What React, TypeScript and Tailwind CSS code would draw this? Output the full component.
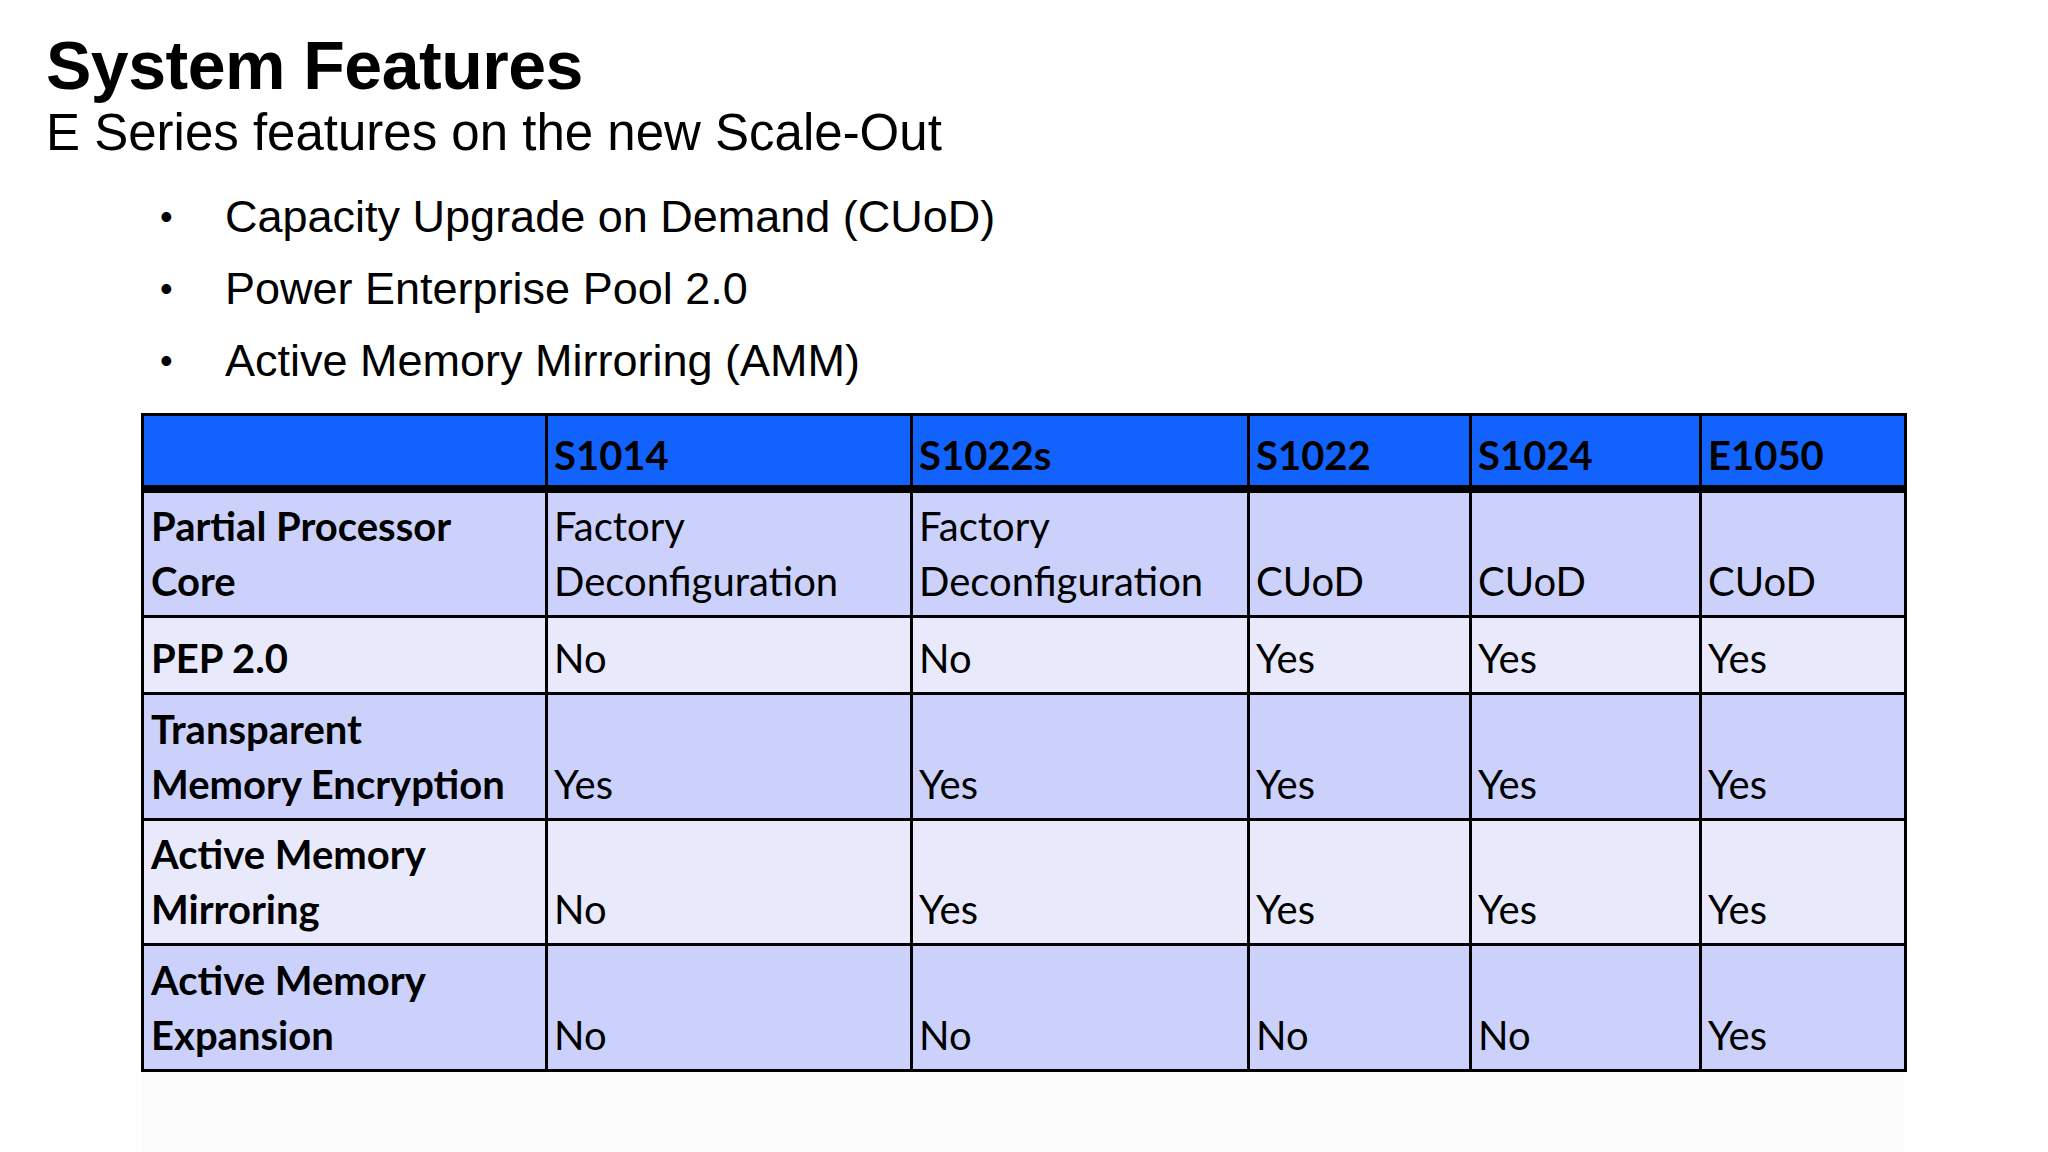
import React from "react";

const columns = ["S1014", "S1022s", "S1022", "S1024", "E1050"];
const colWidths = ["w-[404px]", "w-[365px]", "w-[337px]", "w-[222px]", "w-[230px]", "w-[205px]"];

const rows = [
  {
    label: ["Partial Processor", "Core"],
    values: [["Factory", "Deconfiguration"], ["Factory", "Deconfiguration"], ["CUoD"], ["CUoD"], ["CUoD"]],
    height: "h-[128px]",
    bg: "bg-[#cbd1fb]",
  },
  {
    label: ["PEP 2.0"],
    values: [["No"], ["No"], ["Yes"], ["Yes"], ["Yes"]],
    height: "h-[77px]",
    bg: "bg-[#e8eafc]",
  },
  {
    label: ["Transparent", "Memory Encryption"],
    values: [["Yes"], ["Yes"], ["Yes"], ["Yes"], ["Yes"]],
    height: "h-[126px]",
    bg: "bg-[#cbd1fb]",
  },
  {
    label: ["Active Memory", "Mirroring"],
    values: [["No"], ["Yes"], ["Yes"], ["Yes"], ["Yes"]],
    height: "h-[125px]",
    bg: "bg-[#e8eafc]",
  },
  {
    label: ["Active Memory", "Expansion"],
    values: [["No"], ["No"], ["No"], ["No"], ["Yes"]],
    height: "h-[126px]",
    bg: "bg-[#cbd1fb]",
  },
];

const bullets = [
  "Capacity Upgrade on Demand (CUoD)",
  "Power Enterprise Pool 2.0",
  "Active Memory Mirroring (AMM)",
];

function CellText({ lines, bold }: { lines: string[]; bold?: boolean }) {
  return (
    <div className={`flex flex-col text-[40px] leading-[55px] text-black ${bold ? "font-bold" : "font-normal"}`}>
      {lines.map((l, i) => (
        <span key={i} className="whitespace-nowrap">{l}</span>
      ))}
    </div>
  );
}

export default function App() {
  return (
    <div className="w-[2048px] h-[1152px] bg-white overflow-hidden relative font-['Liberation_Sans',Arial,sans-serif]">
      <div className="pl-[46px] pt-[31px]">
        <h1 className="text-[68px] leading-[68px] font-bold text-black tracking-[-0.5px]">System Features</h1>
        <p className="mt-[8px] text-[51px] leading-[51px] text-black">E Series features on the new Scale-Out</p>
      </div>

      <ul className="mt-[36px] flex flex-col gap-[27px] pl-[160px]">
        {bullets.map((b) => (
          <li key={b} className="flex items-center text-[45px] leading-[45px] text-black">
            <span className="w-[65px] text-[36px]">•</span>
            <span>{b}</span>
          </li>
        ))}
      </ul>

      <div className="mt-[30px] ml-[141px] w-[1763px]">
        <table className="border-collapse table-fixed w-[1763px] font-['Lato','Open_Sans',sans-serif]">
          <colgroup>
            {colWidths.map((w, i) => (
              <col key={i} className={w} />
            ))}
          </colgroup>
          <thead>
            <tr className="h-[74px] bg-[#1262fd]">
              <th className="border-[3px] border-black border-b-[8px]"></th>
              {columns.map((c) => (
                <th key={c} className="border-[3px] border-black border-b-[8px] text-left align-bottom px-[6px] pb-[2px]">
                  <CellText lines={[c]} bold />
                </th>
              ))}
            </tr>
          </thead>
          <tbody>
            {rows.map((r, ri) => (
              <tr key={ri} className={`${r.height} ${r.bg}`}>
                <td className="border-[3px] border-black align-bottom px-[7px] pb-[6px]">
                  <CellText lines={r.label} bold />
                </td>
                {r.values.map((v, vi) => (
                  <td key={vi} className="border-[3px] border-black align-bottom px-[6px] pb-[6px]">
                    <CellText lines={v} />
                  </td>
                ))}
              </tr>
            ))}
          </tbody>
        </table>
        <div className="h-[90px] bg-[#fcfcfc]"></div>
      </div>
    </div>
  );
}
